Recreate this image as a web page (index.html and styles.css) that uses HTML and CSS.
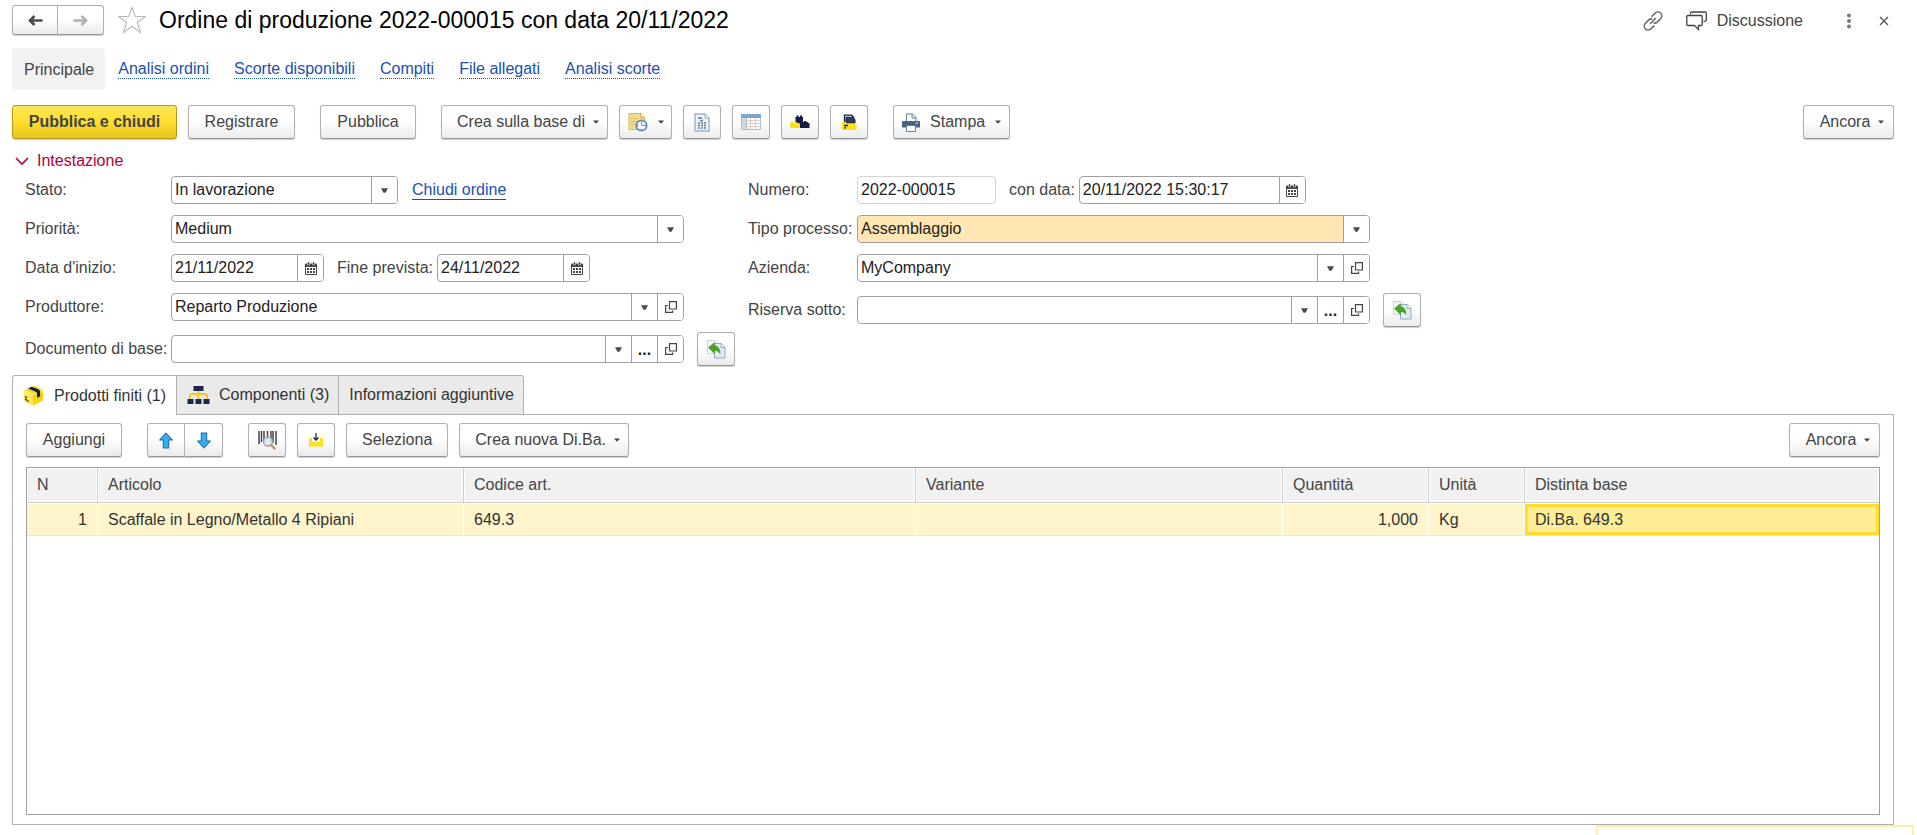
FILE: index.html
```
<!DOCTYPE html>
<html lang="it">
<head>
<meta charset="utf-8">
<title>Ordine di produzione 2022-000015</title>
<link rel="stylesheet" href="styles.css">
</head>
<body>
<svg class="sprite" aria-hidden="true">
  <symbol id="i-down" viewBox="0 0 7 5"><path d="M0 0.300h7L4.500 4.700h-2z" fill="#4a4a4a"/></symbol>
  <symbol id="i-caret" viewBox="0 0 6 4"><path d="M0 0.500h6L3 3.800z" fill="#444"/></symbol>
  <symbol id="i-cal" viewBox="0 0 12 13"><path d="M1 1.500h10a1 1 0 0 1 1 1V12a1 1 0 0 1-1 1H1a1 1 0 0 1-1-1V2.500a1 1 0 0 1 1-1z" fill="#444"/><path d="M1 5h10v7H1z" fill="#fff"/><path d="M2.500 0h2v3h-2zM7.500 0h2v3h-2z" fill="#444" stroke="#fff" stroke-width=".5"/><path d="M2 6h2v2H2zM5 6h2v2H5zM8 6h2v2H8zM2 9h2v2H2zM5 9h2v2H5zM8 9h2v2H8z" fill="#444"/></symbol>
  <symbol id="i-open" viewBox="0 0 12 12"><path d="M4.500.6h6.900v7.400h-6.900zM3 4.500H.6v6.900h7V9.500" fill="none" stroke="#444" stroke-width="1.200"/></symbol>
  <symbol id="i-fill" viewBox="0 0 19 19"><path d="M.5 .5h8l3 3v10H.5z" fill="#f3f7fa" stroke="#c9d4dc"/><path d="M7.500 3.500h7l3.500 3.500v11H7.500z" fill="#dfeaf2" stroke="#94acbd"/><path d="M14 3.500v4h4" fill="#fff" stroke="#94acbd"/><path d="M1.500 7.500 7.500 2.500v3c3.500.5 5.500 3.500 5.500 8-1.500-2-3-3-5.500-3v3z" fill="#4aa521" stroke="#3b8f19" stroke-width=".5"/></symbol>
</svg>

<header class="titlebar">
  <div class="split">
    <button class="btn seg" aria-label="Indietro"><svg width="15" height="11" viewBox="0 0 15 11"><path d="M14.500 5.500H3M6.500 1 2 5.500 6.500 10" fill="none" stroke="#4a4a4a" stroke-width="2.600"/></svg></button>
    <button class="btn seg" aria-label="Avanti"><svg width="15" height="11" viewBox="0 0 15 11"><path d="M.5 5.500H12M8.500 1 13 5.500 8.500 10" fill="none" stroke="#b0b0b0" stroke-width="2.600"/></svg></button>
  </div>
  <button class="plain star" aria-label="Preferiti"><svg width="30" height="28" viewBox="0 0 30 28"><path d="M15 1.500 18.300 10.500H28.500L20.300 16.500 23.600 26.500 15 20.300 6.400 26.500 9.700 16.500 1.500 10.500H11.700z" fill="#fff" stroke="#b4bac0" stroke-width="1.100"/></svg></button>
  <h1>Ordine di produzione 2022-000015 con data 20/11/2022</h1>
  <div class="window-tools">
    <button class="plain" aria-label="Collegamento"><svg width="20" height="20" viewBox="0 0 20 20" fill="none" stroke="#666" stroke-width="1.500" stroke-linecap="round"><path d="M9 5.200 12 2.200a3.800 3.800 0 0 1 5.700 5.300l-3.500 3.600a3.800 3.800 0 0 1-3 1"/><path d="M11 14.800 8 17.800a3.800 3.800 0 0 1-5.700-5.300l3.500-3.600a3.800 3.800 0 0 1 3-1M7.500 12.500l5-5"/></svg></button>
    <button class="plain talk"><svg width="21" height="20" viewBox="0 0 21 20" fill="none" stroke="#444" stroke-width="1.300"><path d="M4.500 3.500v-1a1.500 1.500 0 0 1 1.500-1.500h13a1.300 1.300 0 0 1 1.300 1.300v6.500a1.500 1.500 0 0 1-1.500 1.500h-1.300"/><path d="M2 4.500h13a1.200 1.200 0 0 1 1.200 1.200v7.600a1.200 1.200 0 0 1-1.200 1.200h-2.500v4l-4-4H2a1.200 1.200 0 0 1-1.200-1.200V5.700A1.200 1.200 0 0 1 2 4.500z"/></svg>Discussione</button>
    <button class="plain" aria-label="Altro"><svg width="6" height="16" viewBox="0 0 6 16" fill="#777"><circle cx="3" cy="2.500" r="2"/><circle cx="3" cy="8" r="2"/><circle cx="3" cy="13.500" r="2"/></svg></button>
    <button class="plain" aria-label="Chiudi"><svg width="10" height="10" viewBox="0 0 10 10"><path d="M1 1l8 8M9 1 1 9" stroke="#555" stroke-width="1.400"/></svg></button>
  </div>
</header>

<nav class="sections">
  <span class="current">Principale</span>
  <a href="#">Analisi ordini</a>
  <a href="#">Scorte disponibili</a>
  <a href="#">Compiti</a>
  <a href="#">File allegati</a>
  <a href="#">Analisi scorte</a>
</nav>

<div class="toolbar commands">
  <button class="btn primary">Pubblica e chiudi</button>
  <button class="btn post">Registrare</button>
  <button class="btn narrow group">Pubblica</button>
  <button class="btn menu group">Crea sulla base di<svg class="caret"><use href="#i-caret"/></svg></button>
  <button class="btn tool-menu" aria-label="Promemoria"><svg width="20" height="20" viewBox="0 0 20 20"><path d="M1 1.500h12l3.500 3.500v12.500H1z" fill="#f3dc8c" stroke="#d8b75c"/><path d="M12.500 1.500V5.500h4" fill="#fff0b8" stroke="#d3ae4c"/><path d="M3 6.500h2m1.500 0h3M3 9.500h4m1 0h2M3 12.500h2m1 0h2" stroke="#d0b05a"/><circle cx="13.500" cy="13.500" r="5.200" fill="#fff" stroke="#5b8fba" stroke-width="1.700"/><path d="M13.500 10v3.500H17" fill="none" stroke="#7296b5"/><path d="M13.500 9.200v1.300M13.500 16.500v1.300M9.200 13.500h1.300M16.500 13.500h1.300" stroke="#e25a35" stroke-width="1.300"/></svg><svg class="caret"><use href="#i-caret"/></svg></button>
  <button class="btn tool" aria-label="Movimenti"><svg width="16" height="19" viewBox="0 0 16 19"><path d="M1 1h10l4 4v13H1z" fill="#edf4f9" stroke="#9bb5c9" stroke-width="1.400"/><path d="M11 1v4h4" fill="#fff" stroke="#8eabc2"/><path d="M4 5h4M6 7.500h3M4 10h2m1 0h2m1 0h2M4 12.500h2m1 0h2m1 0h2M4 15h2m1 0h2m1 0h2" stroke="#5a7894" stroke-width="1.300"/></svg></button>
  <button class="btn tool" aria-label="Elenco"><svg width="20" height="18" viewBox="0 0 20 18"><path d="M.5 1.500h19v15H.5z" fill="#f8fafc" stroke="#a7bfd2"/><path d="M0 1h20v4H0z" fill="#7fa5c8"/><path d="M1 5h4v11H1z" fill="#ccdce8"/><path d="M1 7.500h18M1 10.500h18M1 13.500h18M9.500 5v11M14.500 5v11" stroke="#d8cfc9"/><path d="M5.500 5v11" stroke="#adc2d3"/></svg></button>
  <button class="btn tool" aria-label="Componenti"><svg width="20" height="14" viewBox="0 0 20 14"><path d="M0 13V8h1V6.500h2v1h2v-1h2V8h3v5z" fill="#ffe01b"/><path d="M5.500 7V2h1V.5h2V2h1.500V.5h2V2h1v5h1V6h2v1h2v1h1.500v5H10V8.500z" fill="#131e46"/></svg></button>
  <button class="btn tool" aria-label="Archivio"><svg width="16" height="17" viewBox="0 0 16 17"><path d="M3.500 8V1.200h7l2 2V5" fill="none" stroke="#131e46" stroke-width="1.300"/><path d="M5 8V3.200h6.500L14 5.500V9H5z" fill="#333a57" stroke="#131e46"/><path d="M1 8h3.500L6 9.500h9.500V16H1z" fill="#ffe01b"/><path d="M3 11.500h4M3 13.800h2" stroke="#131e46" stroke-width="1.300"/></svg></button>
  <button class="btn menu print group"><svg width="18" height="19" viewBox="0 0 18 19"><path d="M4.500 8V1h6l3.500 3.500V8" fill="#fff" stroke="#5f7f99"/><path d="M10 1v4h4" fill="none" stroke="#5f7f99"/><path d="M1 8h16a1 1 0 0 1 1 1V14.500H0V9a1 1 0 0 1 1-1z" fill="#426587"/><path d="M13.500 10H16" stroke="#fff"/><path d="M4.500 12.500h9v6h-9z" fill="#fff" stroke="#5f7f99"/></svg>Stampa<svg class="caret"><use href="#i-caret"/></svg></button>
  <button class="btn menu more">Ancora<svg class="caret"><use href="#i-caret"/></svg></button>
</div>

<button class="plain fold" aria-expanded="true"><svg width="14" height="9" viewBox="0 0 14 9"><path d="M1 1l6 6 6-6" fill="none" stroke="#b3003b" stroke-width="1.600"/></svg>Intestazione</button>

<form class="details">
  <div class="column">
    <div class="row">
      <label for="stato">Stato:</label>
      <div class="box w-status picker"><select id="stato"><option>In lavorazione</option></select><span class="mark"><svg class="down"><use href="#i-down"/></svg></span></div>
      <a class="inline-link" href="#">Chiudi ordine</a>
    </div>
    <div class="row">
      <label for="prio">Priorità:</label>
      <div class="box wide picker"><select id="prio"><option>Medium</option></select><span class="mark"><svg class="down"><use href="#i-down"/></svg></span></div>
    </div>
    <div class="row">
      <label for="inizio">Data d'inizio:</label>
      <div class="box w-date"><input id="inizio" value="21/11/2022"><button type="button" aria-label="Calendario"><svg class="cal"><use href="#i-cal"/></svg></button></div>
      <label class="second" for="fine">Fine prevista:</label>
      <div class="box w-date"><input id="fine" value="24/11/2022"><button type="button" aria-label="Calendario"><svg class="cal"><use href="#i-cal"/></svg></button></div>
    </div>
    <div class="row">
      <label for="prod">Produttore:</label>
      <div class="box wide"><input id="prod" value="Reparto Produzione"><button type="button" aria-label="Elenco"><svg class="down"><use href="#i-down"/></svg></button><button type="button" aria-label="Apri"><svg class="open"><use href="#i-open"/></svg></button></div>
    </div>
    <div class="row tall">
      <label for="doc">Documento di base:</label>
      <div class="box wide"><input id="doc"><button type="button" aria-label="Elenco"><svg class="down"><use href="#i-down"/></svg></button><button type="button" class="dots" aria-label="Scegli">...</button><button type="button" aria-label="Apri"><svg class="open"><use href="#i-open"/></svg></button></div>
      <button type="button" class="btn tool" aria-label="Compila"><svg width="19" height="19"><use href="#i-fill"/></svg></button>
    </div>
  </div>
  <div class="column right">
    <div class="row">
      <label for="num">Numero:</label>
      <div class="box faint w-number"><input id="num" value="2022-000015"></div>
      <label class="second" for="data">con data:</label>
      <div class="box w-stamp"><input id="data" value="20/11/2022 15:30:17"><button type="button" aria-label="Calendario"><svg class="cal"><use href="#i-cal"/></svg></button></div>
    </div>
    <div class="row">
      <label for="tipo">Tipo processo:</label>
      <div class="box wide picker amber"><select id="tipo"><option>Assemblaggio</option></select><span class="mark"><svg class="down"><use href="#i-down"/></svg></span></div>
    </div>
    <div class="row">
      <label for="az">Azienda:</label>
      <div class="box wide"><input id="az" value="MyCompany"><button type="button" aria-label="Elenco"><svg class="down"><use href="#i-down"/></svg></button><button type="button" aria-label="Apri"><svg class="open"><use href="#i-open"/></svg></button></div>
    </div>
    <div class="row tall">
      <label for="ris">Riserva sotto:</label>
      <div class="box wide"><input id="ris"><button type="button" aria-label="Elenco"><svg class="down"><use href="#i-down"/></svg></button><button type="button" class="dots" aria-label="Scegli">...</button><button type="button" aria-label="Apri"><svg class="open"><use href="#i-open"/></svg></button></div>
      <button type="button" class="btn tool" aria-label="Compila"><svg width="19" height="19"><use href="#i-fill"/></svg></button>
    </div>
  </div>
</form>

<div class="tabs" role="tablist">
  <button class="tab active" role="tab" aria-selected="true"><svg width="21" height="21" viewBox="0 0 21 21"><path d="M1 5.500 11 .8l9 4.200v10L10 20.500 1 16z" fill="#fbd926"/><path d="M1 5.500 10 9.500v11L1 16z" fill="#fde85e"/><path d="M10 9.500l10-4.500v10l-10 5.500z" fill="#f9d40f"/><path d="M1 5.500 10 9.500l10-4.500" fill="none" stroke="#fff3a6"/><path d="M5 3.500l3.500-1.700c4 1.200 8 2.500 8.500 4.500l.2 5-3 1.500-.2-5C12 6 8 5 5 3.500z" fill="#131e46"/><path d="M2 11.500l2 1.500M3.500 15.500l2.500 1M2 14l2 1" stroke="#333" stroke-width="1.300"/></svg>Prodotti finiti (1)</button>
  <button class="tab" role="tab"><svg width="23" height="20" viewBox="0 0 23 20"><path d="M3 14v-3q0-2 2-2h13q2 0 2 2v3M11.500 5v9" fill="none" stroke="#f5c823" stroke-width="1.800"/><path d="M6.500 1h10v5h-10zM.5 14h6v5h-6zM8.500 14h6v5h-6zM16.500 14h6v5h-6z" fill="#1b2748"/></svg>Componenti (3)</button>
  <button class="tab" role="tab">Informazioni aggiuntive</button>
</div>

<main class="panel">
  <div class="toolbar">
    <button class="btn add">Aggiungi</button>
    <div class="split group">
      <button class="btn seg" aria-label="Sposta su"><svg width="14" height="17" viewBox="0 0 14 17"><path d="M7 1 13.200 8H9.700v8H4.300V8H.8z" fill="#38adf2" stroke="#1a6fa8" stroke-width="1.100"/></svg></button>
      <button class="btn seg" aria-label="Sposta giù"><svg width="14" height="17" viewBox="0 0 14 17"><path d="M7 16 13.200 9H9.700V1H4.300v8H.8z" fill="#38adf2" stroke="#1a6fa8" stroke-width="1.100"/></svg></button>
    </div>
    <button class="btn tool group" aria-label="Codice a barre"><svg width="19" height="20" viewBox="0 0 19 20"><path d="M1 1v13M3.500 1v11M6 1v11M9.500 1v9M13 1v11M15 1v12M18 1v14" stroke="#444" stroke-width="1.500"/><circle cx="10" cy="11.500" r="4.500" fill="#dfe7ec" fill-opacity=".85" stroke="#98a5ad" stroke-width="1.300"/><path d="M13.200 15l3.300 3.500" stroke="#bd9166" stroke-width="2.500" stroke-linecap="round"/></svg></button>
    <button class="btn tool" aria-label="Importa"><svg width="14" height="14" viewBox="0 0 14 14"><path d="M0 5h3v4h8V5h3v8.500H0z" fill="#ffdf22"/><path d="M7 0v6.500M4.500 4.500 7 7l2.500-2.500" fill="none" stroke="#1b2748" stroke-width="1.300"/></svg></button>
    <button class="btn select">Seleziona</button>
    <button class="btn menu">Crea nuova Di.Ba.<svg class="caret"><use href="#i-caret"/></svg></button>
    <button class="btn menu more">Ancora<svg class="caret"><use href="#i-caret"/></svg></button>
  </div>
  <div class="grid">
    <table>
      <colgroup><col class="c-n"><col class="c-item"><col class="c-code"><col class="c-variant"><col class="c-qty"><col class="c-unit"><col></colgroup>
      <thead><tr><th>N</th><th>Articolo</th><th>Codice art.</th><th>Variante</th><th>Quantità</th><th>Unità</th><th>Distinta base</th></tr></thead>
      <tbody><tr><td class="num">1</td><td>Scaffale in Legno/Metallo 4 Ripiani</td><td>649.3</td><td></td><td class="num">1,000</td><td>Kg</td><td class="cursor">Di.Ba. 649.3</td></tr></tbody>
    </table>
  </div>
</main>
<div class="notice"></div>
</body>
</html>
```
FILE: styles.css
```
* { box-sizing: border-box; }
body {
  margin: 0;
  min-height: 100vh;
  padding: 5px 23px 10px 12px;
  display: flex;
  flex-direction: column;
  position: relative;
  background: #fff;
  color: #444;
  font: 16px/20px "Liberation Sans", Arial, sans-serif;
}
button, input, select { font: inherit; color: inherit; margin: 0; }
svg { flex: none; display: block; }
.sprite { position: absolute; width: 0; height: 0; }
a { color: #1a50b0; text-decoration: none; }

.btn {
  height: 34px;
  padding: 0 15px;
  display: flex;
  align-items: center;
  justify-content: center;
  border: 1px solid #b0b0b0;
  border-bottom-color: #979797;
  border-radius: 3px;
  background: linear-gradient(#fff 45%, #ebebeb);
  box-shadow: 0 1px 1px #ccc;
  white-space: nowrap;
}
.plain {
  border: 0;
  padding: 0;
  background: none;
  display: flex;
  align-items: center;
}
.split { display: flex; }
.seg { width: 38px; padding: 0; }
.seg:first-child { border-radius: 3px 0 0 3px; }
.seg:last-child { border-radius: 0 3px 3px 0; border-left: 0; }
.caret { width: 6px; height: 4px; }

.titlebar { display: flex; align-items: center; height: 30px; }
.titlebar .seg { width: 46px; height: 30px; }
.star { margin-left: 13px; }
h1 {
  margin: 0 0 0 12px;
  font-size: 23px;
  line-height: 28px;
  font-weight: normal;
  color: #000;
  white-space: nowrap;
}
.window-tools {
  margin-left: auto;
  padding: 2px 5px 0 0;
  display: flex;
  align-items: center;
  gap: 23px;
}
.talk { gap: 10px; }
.window-tools .talk { margin-right: 20px; }
.window-tools button:last-child { margin-left: 4px; }

.sections { display: flex; align-items: center; gap: 25px; margin-top: 13px; height: 42px; }
.sections a { border-bottom: 1px dotted #1a50b0; line-height: 18px; }
.current {
  display: flex;
  align-items: center;
  height: 42px;
  padding: 1px 11px 0 12px;
  margin-right: -12px;
  border-radius: 4px;
  background: #f2f2f2;
}

.toolbar { display: flex; gap: 11px; }
.commands { margin-top: 15px; }
.group { margin-left: 14px; }
.primary {
  width: 165px;
  font-weight: bold;
  border-color: #b59b14;
  background: linear-gradient(#ffe759, #fedd2c 50%, #e8c41f);
}
.post { width: 107px; }
.narrow, .add { width: 96px; }
.tool { width: 38px; padding: 0; }
.tool-menu { width: 53px; padding: 0 8px; gap: 10px; }
.menu { gap: 8px; padding: 0 8px 0 15px; }
.print { padding: 0 8px; gap: 10px; }
.more { margin-left: auto; width: 91px; }

.fold { color: #b3003b; margin: 12px 0 0 3px; gap: 8px; height: 20px; align-self: flex-start; }

.details {
  display: grid;
  grid-template-columns: 710fr 673fr;
  gap: 13px;
  max-width: 1396px;
  margin: 5px 0 0 13px;
}
.column { display: flex; flex-direction: column; gap: 11px; }
.row { display: flex; align-items: center; height: 28px; }
.row > label:first-child { width: 146px; flex: none; white-space: nowrap; }
.right .row > label:first-child { width: 109px; }
.row.tall { height: 34px; }
.row.tall .btn { margin-left: 13px; flex: none; }
.second { margin: 0 4px 0 13px; white-space: nowrap; }
.inline-link { margin-left: 14px; line-height: 18px; border-bottom: 1px solid #1a50b0; }
.box {
  display: flex;
  height: 28px;
  border: 1px solid #a0a0a0;
  border-radius: 4px;
  overflow: hidden;
  background: #fff;
  color: #222;
}
.box input { flex: 1; width: 0; min-width: 0; border: 0; padding: 0 3px; background: none; }
.box button, .mark {
  flex: none;
  width: 26px;
  padding: 0;
  border: 0;
  border-left: 1px solid #a0a0a0;
  background: #fff;
  display: flex;
  align-items: center;
  justify-content: center;
}
.box .dots { padding-top: 2px; font-weight: bold; }
.box.faint { border-color: #d4d4d4; }
.picker { display: grid; }
.picker select {
  grid-area: 1 / 1;
  appearance: none;
  min-width: 0;
  border: 0;
  padding: 0 29px 0 3px;
  background: none;
}
.mark { grid-area: 1 / 1; justify-self: end; pointer-events: none; }
.box.amber { background: #ffe6b3; }
.w-status { width: 227px; }
.w-date { width: 153px; }
.w-number { width: 139px; }
.w-stamp { width: 227px; }
.wide { flex: 1; margin-right: 51px; }
.tall .wide { margin-right: 0; }
.down { width: 7px; height: 5px; }
.cal { width: 12px; height: 13px; }
.open { width: 12px; height: 12px; }

.tabs { display: flex; margin-top: 9px; }
.tab {
  display: flex;
  align-items: center;
  height: 39px;
  padding: 0 9px 0 10px;
  gap: 9px;
  border: 1px solid #b0b0b0;
  border-left: 0;
  border-bottom: 0;
  background: #eaeaea;
  color: #333;
  white-space: nowrap;
}
.tab:first-child { border-left: 1px solid #b0b0b0; border-radius: 3px 0 0 0; padding-right: 10px; gap: 10px; }
.tab:last-child { border-radius: 0 3px 0 0; }
.tab.active { height: 40px; margin-bottom: -1px; background: #fff; z-index: 1; }

.panel {
  flex: 1;
  display: flex;
  flex-direction: column;
  padding: 8px 13px 9px;
  border: 1px solid #b0b0b0;
}
.grid { flex: 1; margin-top: 10px; border: 1px solid #a0a0a0; overflow: hidden; }
table { width: 100%; table-layout: fixed; border-collapse: separate; border-spacing: 0; }
th, td { text-align: left; padding: 0 10px; font-weight: normal; white-space: nowrap; }
th {
  height: 35px;
  border-right: 1px solid #ccc;
  border-bottom: 1px solid #ccc;
  background: #f1f1f1;
  box-shadow: inset 0 0 0 1px #fff;
}
td {
  height: 33px;
  border-top: 1px solid #fff;
  border-right: 1px solid #fff;
  border-bottom: 1px solid #e5e5e5;
  background: #fff5cc;
  color: #333;
}
th:last-child, td:last-child { border-right: 0; }
.num { text-align: right; }
td.cursor { background: #ffed94; box-shadow: inset 0 0 0 3px #ffdc2d; }
.c-n { width: 71px; }
.c-item { width: 366px; }
.c-code { width: 452px; }
.c-variant { width: 367px; }
.c-qty { width: 146px; }
.c-unit { width: 96px; }

.notice {
  position: absolute;
  right: 3px;
  bottom: 0;
  width: 318px;
  height: 10px;
  border: 2px solid #ffeea8;
  border-bottom: 0;
  background: #fff;
}
```
